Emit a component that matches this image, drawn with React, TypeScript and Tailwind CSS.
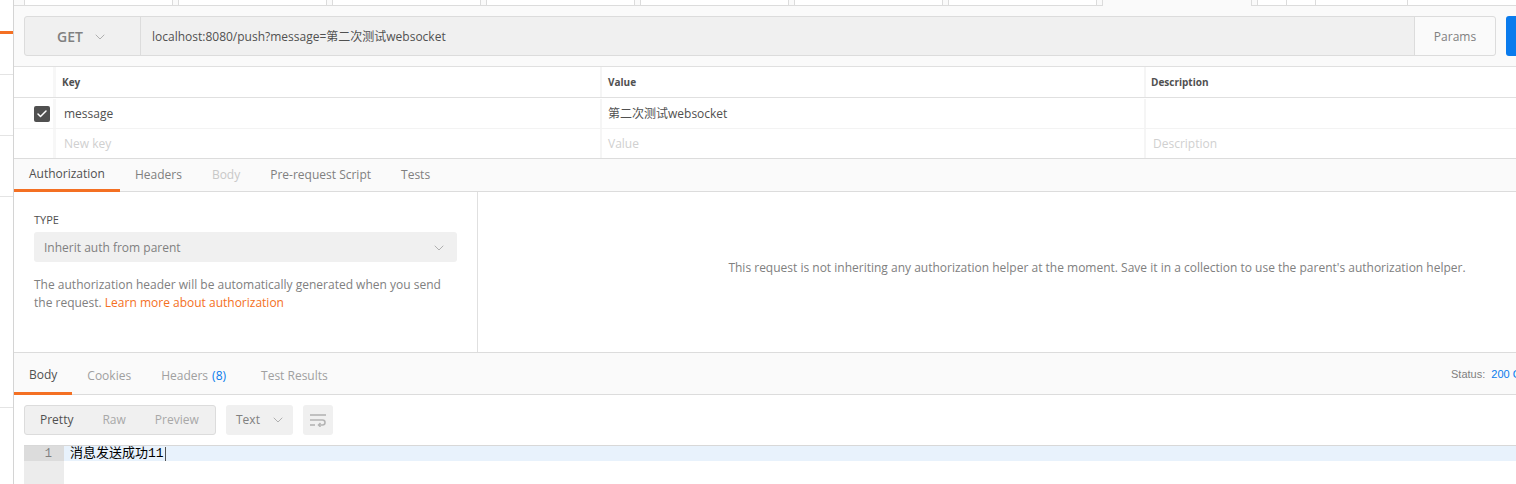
import { ChevronDown, Check } from 'lucide-react'

const topTabs = [24, 178, 332, 486, 640, 794, 948]

function WrapIcon() {
  return (
    <svg width="18" height="14" viewBox="0 0 18 14" fill="none" stroke="#b4b4b4" strokeWidth="1.6">
      <path d="M1 2h16" />
      <path d="M1 7h12.5a2.5 2.5 0 0 1 0 5H10" />
      <path d="M11.5 10.2L9.6 12l1.9 1.8" />
      <path d="M1 12h5" />
    </svg>
  )
}

export default function App() {
  return (
    <div className="w-[1516px] h-[484px] overflow-hidden bg-[#fafafa] font-['Open_Sans','Noto_Sans_CJK_SC',sans-serif] text-[12px] text-[#505050]">
      <div className="flex w-[1716px] h-[484px]">
        {/* left sidebar edge */}
        <aside className="w-[14px] shrink-0 bg-white border-r border-[#d4d4d4] flex flex-col">
          <div className="h-[31px] shrink-0" />
          <div className="h-[3px] shrink-0 bg-[#f47023]" />
          <div className="h-[41px] shrink-0 border-b border-[#e4e4e4]" />
          <div className="h-[61px] shrink-0 border-b border-[#e4e4e4]" />
          <div className="h-[61px] shrink-0 border-b border-[#e4e4e4]" />
          <div className="h-[211px] shrink-0 border-b border-[#e4e4e4]" />
        </aside>

        <main className="flex-1 flex flex-col min-w-0 overflow-hidden">
          {/* request tab strip (scrolled) */}
          <div className="h-[6px] shrink-0 flex border-b border-[#dcdcdc] pl-[10px]">
            {topTabs.map((x) => (
              <div key={x} className="w-[149px] mr-[5px] h-[5px] bg-white border-x border-[#dcdcdc]" />
            ))}
            <div className="w-[150px] mr-[5px] h-[6px] bg-[#fafafa] border-x border-[#dcdcdc] -mb-px" />
            <div className="w-[30px] h-[5px] bg-white border-x border-[#dcdcdc]" />
            <div className="w-[29px] h-[5px] bg-white border-r border-[#dcdcdc]" />
            <div className="w-[92px] h-[5px] bg-white border-r border-[#dcdcdc]" />
            <div className="w-[120px] h-[5px] bg-white border-r border-[#dcdcdc]" />
          </div>

          {/* url bar */}
          <div className="flex shrink-0 mt-[10px] px-[10px] h-[40px] gap-[10px]">
            <div className="flex w-[1472px] border border-[#dcdcdc] rounded-[3px] bg-[#f0f0f0]">
              <div className="w-[116px] flex items-center justify-center gap-[9px] border-r border-[#dcdcdc] pt-px">
                <span className="text-[14px] font-semibold text-[#808080]">GET</span>
                <ChevronDown size={16} strokeWidth={1.5} color="#b0b0b0" />
              </div>
              <div className="flex-1 flex items-center pl-[11px] pt-px text-[12px] text-[#505050]">
                localhost:8080/push?message=第二次测试websocket
              </div>
              <div className="w-[81px] flex items-center justify-center pt-px bg-[#fafafa] border-l border-[#dcdcdc] rounded-r-[3px] text-[#808080]">
                Params
              </div>
            </div>
            <div className="w-[100px] bg-[#097bed] rounded-[3px] text-white flex items-center justify-center">Send</div>
            <div className="w-[90px] bg-[#f0f0f0] border border-[#dcdcdc] rounded-[3px] flex items-center justify-center">Save</div>
          </div>

          {/* params table */}
          <div className="shrink-0 mt-[10px] bg-white border-t border-[#e0e0e0]">
            <div className="flex h-[31px] border-b border-[#e0e0e0] text-[10px] font-bold text-[#505050]">
              <div className="w-[39px]" />
              <div className="w-[3px] bg-[#f7f7f7]" />
              <div className="w-[544px] flex items-center pl-[6px]">Key</div>
              <div className="w-[544px] flex items-center pl-[6px] border-l-2 border-[#f5f5f5]">Value</div>
              <div className="flex-1 flex items-center pl-[5px] border-l-2 border-[#f5f5f5]">Description</div>
            </div>
            <div className="flex h-[31px] pt-px border-b border-[#f3f3f3]">
              <div className="w-[39px] flex items-center justify-end pr-[3px]">
                <div className="w-[16px] h-[16px] rounded-[2px] bg-[#505050] flex items-center justify-center">
                  <Check size={12} strokeWidth={3} color="#ffffff" />
                </div>
              </div>
              <div className="w-[3px] bg-[#f7f7f7]" />
              <div className="w-[544px] flex items-center pl-[8px]">message</div>
              <div className="w-[544px] flex items-center pl-[6px] border-l-2 border-[#f5f5f5]">第二次测试websocket</div>
              <div className="flex-1 border-l-2 border-[#f5f5f5]" />
            </div>
            <div className="flex h-[30px] border-b border-[#dcdcdc] text-[#d0d0d0]">
              <div className="w-[39px]" />
              <div className="w-[3px] bg-[#f7f7f7]" />
              <div className="w-[544px] flex items-center pl-[8px]">New key</div>
              <div className="w-[544px] flex items-center pl-[6px] border-l-2 border-[#f5f5f5]">Value</div>
              <div className="flex-1 flex items-center pl-[7px] border-l-2 border-[#f5f5f5]">Description</div>
            </div>
          </div>

          {/* request sub tabs */}
          <div className="flex shrink-0 h-[33px] border-b border-[#dcdcdc] bg-[#fafafa]">
            <div className="px-[15px] flex items-center border-b-[3px] border-[#f47023] -mb-px text-[#505050]">Authorization</div>
            <div className="px-[15px] flex items-center text-[#808080]">Headers</div>
            <div className="px-[15px] flex items-center text-[#c8c8c8]">Body</div>
            <div className="px-[15px] flex items-center text-[#808080]">Pre-request Script</div>
            <div className="px-[15px] flex items-center text-[#808080]">Tests</div>
          </div>

          {/* auth panel */}
          <div className="flex shrink-0 h-[161px] border-b border-[#dcdcdc] bg-white">
            <div className="w-[464px] border-r border-[#e0e0e0] px-[20px] pt-[20px]">
              <div className="text-[11px] leading-[15px] text-[#505050]">TYPE</div>
              <div className="mt-[5px] h-[30px] pt-px rounded-[3px] bg-[#f0f0f0] flex items-center justify-between pl-[10px] pr-[10px] text-[#808080]">
                <span>Inherit auth from parent</span>
                <ChevronDown size={16} strokeWidth={1.5} color="#b0b0b0" />
              </div>
              <p className="mt-[14px] leading-[18px] text-[#808080]">
                The authorization header will be automatically generated when you send the request.{' '}
                <span className="text-[#f47023]">Learn more about authorization</span>
              </p>
            </div>
            <div className="flex-1 flex items-center justify-center pb-[8px] text-[12px] text-[#808080]">
              This request is not inheriting any authorization helper at the moment. Save it in a collection to use the parent's authorization helper.
            </div>
          </div>

          {/* response tabs */}
          <div className="flex shrink-0 h-[42px] border-b border-[#dcdcdc] bg-[#fafafa]">
            <div className="px-[15px] pt-[5px] flex items-center border-b-[3px] border-[#f47023] -mb-px text-[#505050]">Body</div>
            <div className="px-[15px] pt-[5px] flex items-center text-[#a0a0a0]">Cookies</div>
            <div className="px-[15px] pt-[5px] flex items-center text-[#a0a0a0]">
              Headers <span className="ml-[4px] text-[#097bed]">(8)</span>
            </div>
            <div className="px-[20px] pt-[5px] flex items-center text-[#a0a0a0]">Test Results</div>
            <div className="flex-1" />
            <div className="flex items-center gap-[20px] pr-[25px] pt-[2px] font-['Liberation_Sans',sans-serif] text-[11px] text-[#808080]">
              <span>
                Status: <span className="ml-[3px] text-[#097bed]">200 OK</span>
              </span>
              <span>
                Time: <span className="ml-[3px] text-[#097bed]">31 ms</span>
              </span>
              <span>
                Size: <span className="ml-[3px] text-[#097bed]">152 B</span>
              </span>
            </div>
          </div>

          {/* response body */}
          <div className="shrink-0 bg-white px-[10px] pt-[10px] h-[200px]">
            <div className="flex h-[30px] gap-[10px]">
              <div className="w-[192px] flex items-center border border-[#dcdcdc] rounded-[3px] bg-[#f0f0f0] pl-[15px] gap-[29px]">
                <span className="text-[#505050]">Pretty</span>
                <span className="text-[#a8a8a8]">Raw</span>
                <span className="text-[#a8a8a8]">Preview</span>
              </div>
              <div className="w-[67px] flex items-center justify-between rounded-[3px] bg-[#f0f0f0] pl-[10px] pr-[7px] text-[#808080]">
                <span>Text</span>
                <ChevronDown size={16} strokeWidth={1.5} color="#b0b0b0" />
              </div>
              <div className="w-[30px] flex items-center justify-center rounded-[3px] bg-[#f0f0f0]">
                <WrapIcon />
              </div>
            </div>
            <div className="mt-[10px] flex h-[60px] border-t border-[#d8d8d8]">
              <div className="w-[40px] bg-[#ececec]">
                <div className="h-[15px] bg-[#dcdcdc] flex items-center justify-end pr-[12px] font-['Liberation_Mono',monospace] text-[12px] text-[#808080]">1</div>
              </div>
              <div className="flex-1">
                <div className="h-[15px] bg-[#e8f2fc] flex items-center pl-[6px] font-['Liberation_Mono','Noto_Sans_CJK_SC',monospace] text-[13px] text-black">
                  消息发送成功11
                  <span className="ml-px w-px h-[14px] bg-[#505050]" />
                </div>
              </div>
            </div>
          </div>
        </main>
      </div>
    </div>
  )
}
